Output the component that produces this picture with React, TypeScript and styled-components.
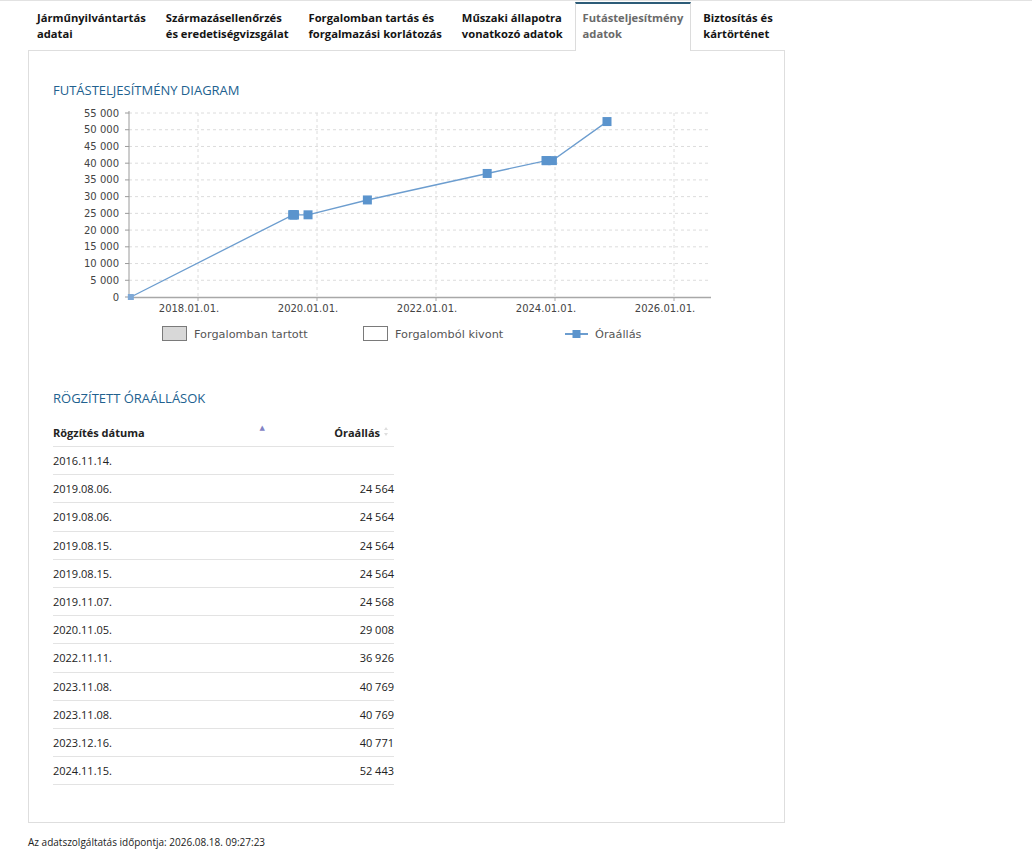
import React from "react";
import styled, { createGlobalStyle } from "styled-components";

const GlobalStyle = createGlobalStyle`
  html, body {
    margin: 0;
    padding: 0;
    background: #fff;
  }
  body {
    font-family: "Open Sans", "DejaVu Sans", sans-serif;
    color: #222;
  }
`;

const Page = styled.div`
  width: 1032px;
  border-top: 1px solid #e2e2e2;
`;

const Content = styled.div`
  margin-left: 28px;
  width: 757px;
`;

const TabList = styled.div`
  display: flex;
  align-items: flex-end;
  gap: 4px;
  padding-left: 1px;
  height: 49px;
  position: relative;
  z-index: 1;
`;

const Tab = styled.div<{ $active?: boolean }>`
  box-sizing: border-box;
  height: ${(p) => (p.$active ? "49px" : "48px")};
  padding: 6px 7px 0 7px;
  border-top: 2px solid ${(p) => (p.$active ? "#2d5c78" : "transparent")};
  border-left: 1px solid ${(p) => (p.$active ? "#dcdcdc" : "transparent")};
  border-right: 1px solid ${(p) => (p.$active ? "#dcdcdc" : "transparent")};
  background: #fff;
  margin-bottom: ${(p) => (p.$active ? "-1px" : "0")};
  font-size: 11.2px;
  font-weight: 700;
  line-height: 16px;
  color: ${(p) => (p.$active ? "#6a6a6a" : "#141414")};
  white-space: nowrap;
  cursor: pointer;
`;

const Panel = styled.div`
  border: 1px solid #dedede;
  padding: 30px 24px 37px 24px;
`;

const SectionTitle = styled.h3`
  margin: 0;
  font-size: 13px;
  font-weight: 400;
  line-height: 18px;
  color: #21618f;
  text-transform: uppercase;
`;

const ChartSvg = styled.svg`
  display: block;
  margin-top: 6px;
  font-family: "DejaVu Sans", sans-serif;
`;

const TableTitle = styled(SectionTitle)`
  margin-top: 39px;
`;

const Table = styled.table`
  margin-top: 12px;
  width: 341px;
  border-collapse: collapse;
  font-size: 11px;
  color: #222;
`;

const Th = styled.th<{ $right?: boolean }>`
  height: 27px;
  padding: 0;
  text-align: ${(p) => (p.$right ? "right" : "left")};
  font-weight: 700;
  border-bottom: 1px solid #e3e3e3;
  vertical-align: middle;
`;

const HeadInner = styled.div<{ $right?: boolean }>`
  display: flex;
  align-items: center;
  justify-content: ${(p) => (p.$right ? "flex-end" : "space-between")};
  gap: 4px;
  padding-right: ${(p) => (p.$right ? "6px" : "5px")};
`;

const SortUp = styled.span`
  align-self: flex-start;
  margin-top: -2px;
  font-size: 7px;
  color: #8282c4;
`;

const SortNone = styled.svg`
  display: block;
  margin-top: -3px;
`;

const Td = styled.td<{ $right?: boolean }>`
  height: 27.2px;
  padding: 0;
  text-align: ${(p) => (p.$right ? "right" : "left")};
  border-bottom: 1px solid #e3e3e3;
  vertical-align: middle;
`;

const Footer = styled.div`
  margin-top: 12px;
  font-size: 10px;
  line-height: 14px;
  color: #222;
`;

const tabs = [
  ["Járműnyilvántartás", "adatai"],
  ["Származásellenőrzés", "és eredetiségvizsgálat"],
  ["Forgalomban tartás és", "forgalmazási korlátozás"],
  ["Műszaki állapotra", "vonatkozó adatok"],
  ["Futásteljesítmény", "adatok"],
  ["Biztosítás és", "kártörténet"],
];

const records: [string, number | null][] = [
  ["2016.11.14.", null],
  ["2019.08.06.", 24564],
  ["2019.08.06.", 24564],
  ["2019.08.15.", 24564],
  ["2019.08.15.", 24564],
  ["2019.11.07.", 24568],
  ["2020.11.05.", 29008],
  ["2022.11.11.", 36926],
  ["2023.11.08.", 40769],
  ["2023.11.08.", 40769],
  ["2023.12.16.", 40771],
  ["2024.11.15.", 52443],
];

const fmt = (n: number) => {
  const s = String(n);
  return s.length > 3 ? s.slice(0, -3) + "\u00a0" + s.slice(-3) : s;
};

// chart geometry (svg coords)
const L = 76;
const R = 658;
const T = 8;
const B = 192;
const yOf = (v: number) => B - (v * (B - T)) / 55000;
const yearFrac = (d: string) => {
  const [y, m, day] = d.split(".").map(Number);
  const start = Date.UTC(y, 0, 1);
  const cur = Date.UTC(y, m - 1, day);
  return y + (cur - start) / (365 * 86400000);
};
const xOf = (yr: number) => 145 + (yr - 2018) * 59.5;

const yTicks = Array.from({ length: 12 }, (_, i) => i * 5000);
const xTicks = [2018, 2020, 2022, 2024, 2026];

const Chart: React.FC = () => {
  const pts = records.map(([d, v]) => ({ x: xOf(yearFrac(d)), y: yOf(v ?? 0), empty: v === null }));
  const line = pts.map((p) => `${p.x.toFixed(1)},${p.y.toFixed(1)}`).join(" ");
  return (
    <ChartSvg width={680} height={245} viewBox="0 0 680 245">
      {yTicks.slice(1).map((v) => (
        <line key={v} x1={L} x2={R} y1={yOf(v)} y2={yOf(v)} stroke="#dcdcdc" strokeDasharray="3 3" />
      ))}
      {xTicks.map((t) => (
        <line key={t} x1={xOf(t)} x2={xOf(t)} y1={T} y2={B} stroke="#dcdcdc" strokeDasharray="3 3" />
      ))}
      <line x1={L} x2={L} y1={T - 2} y2={B} stroke="#9a9a9a" />
      <line x1={L} x2={R} y1={B + 0.5} y2={B + 0.5} stroke="#a8a8a8" strokeWidth={1.5} />
      {yTicks.map((v) => (
        <g key={v}>
          <line x1={L - 4} x2={L} y1={yOf(v)} y2={yOf(v)} stroke="#9a9a9a" />
          <text x={66} y={yOf(v) + 3.5} fontSize={10} fill="#444" textAnchor="end">
            {fmt(v).replace("\u00a0", " ")}
          </text>
        </g>
      ))}
      {xTicks.map((t) => (
        <g key={t}>
          <line x1={xOf(t)} x2={xOf(t)} y1={B} y2={B + 4} stroke="#a8a8a8" />
          <text x={xOf(t) - 9} y={207} fontSize={10} fill="#444" textAnchor="middle">
            {t}.01.01.
          </text>
        </g>
      ))}
      <polyline points={line} fill="none" stroke="#6c9dcf" strokeWidth={1.3} />
      {pts.map((p, i) =>
        p.empty ? (
          <rect key={i} x={p.x - 3} y={p.y - 3} width={6} height={6} fill="#7ea8d6" />
        ) : (
          <rect key={i} x={p.x - 4.5} y={p.y - 4.5} width={9} height={9} fill="#5b94cd" />
        )
      )}
      <rect x={109.5} y={221.5} width={24} height={14} fill="#d8d8d8" stroke="#7a7a7a" />
      <text x={141} y={233} fontSize={11.3} fill="#555">Forgalomban tartott</text>
      <rect x={310.5} y={221.5} width={24} height={14} fill="#fff" stroke="#7a7a7a" />
      <text x={342} y={233} fontSize={11.3} fill="#555">Forgalomból kivont</text>
      <line x1={512} x2={535} y1={229} y2={229} stroke="#6c9dcf" strokeWidth={2} />
      <rect x={519.5} y={225} width={8} height={8} fill="#5b94cd" />
      <text x={542} y={233} fontSize={11.3} fill="#555">Óraállás</text>
    </ChartSvg>
  );
};

const App: React.FC = () => {
  return (
    <Page>
      <GlobalStyle />
      <Content>
        <TabList>
          {tabs.map(([a, b], i) => (
            <Tab key={a} $active={i === 4}>
              {a}
              <br />
              {b}
            </Tab>
          ))}
        </TabList>
        <Panel>
          <SectionTitle>Futásteljesítmény diagram</SectionTitle>
          <Chart />
          <TableTitle>Rögzített óraállások</TableTitle>
          <Table>
            <colgroup>
              <col style={{ width: 217 }} />
              <col />
            </colgroup>
            <thead>
              <tr>
                <Th>
                  <HeadInner>
                    <span>Rögzítés dátuma</span>
                    <SortUp>▲</SortUp>
                  </HeadInner>
                </Th>
                <Th $right>
                  <HeadInner $right>
                    <span>Óraállás</span>
                    <SortNone width={4} height={9} viewBox="0 0 4 9">
                      <path d="M2 0 L4 3 L0 3 Z M2 9 L4 6 L0 6 Z" fill="#dedede" />
                    </SortNone>
                  </HeadInner>
                </Th>
              </tr>
            </thead>
            <tbody>
              {records.map(([d, v], i) => (
                <tr key={i}>
                  <Td>{d}</Td>
                  <Td $right>{v === null ? "" : fmt(v)}</Td>
                </tr>
              ))}
            </tbody>
          </Table>
        </Panel>
        <Footer>Az adatszolgáltatás időpontja: 2026.08.18. 09:27:23</Footer>
      </Content>
    </Page>
  );
};

export default App;
